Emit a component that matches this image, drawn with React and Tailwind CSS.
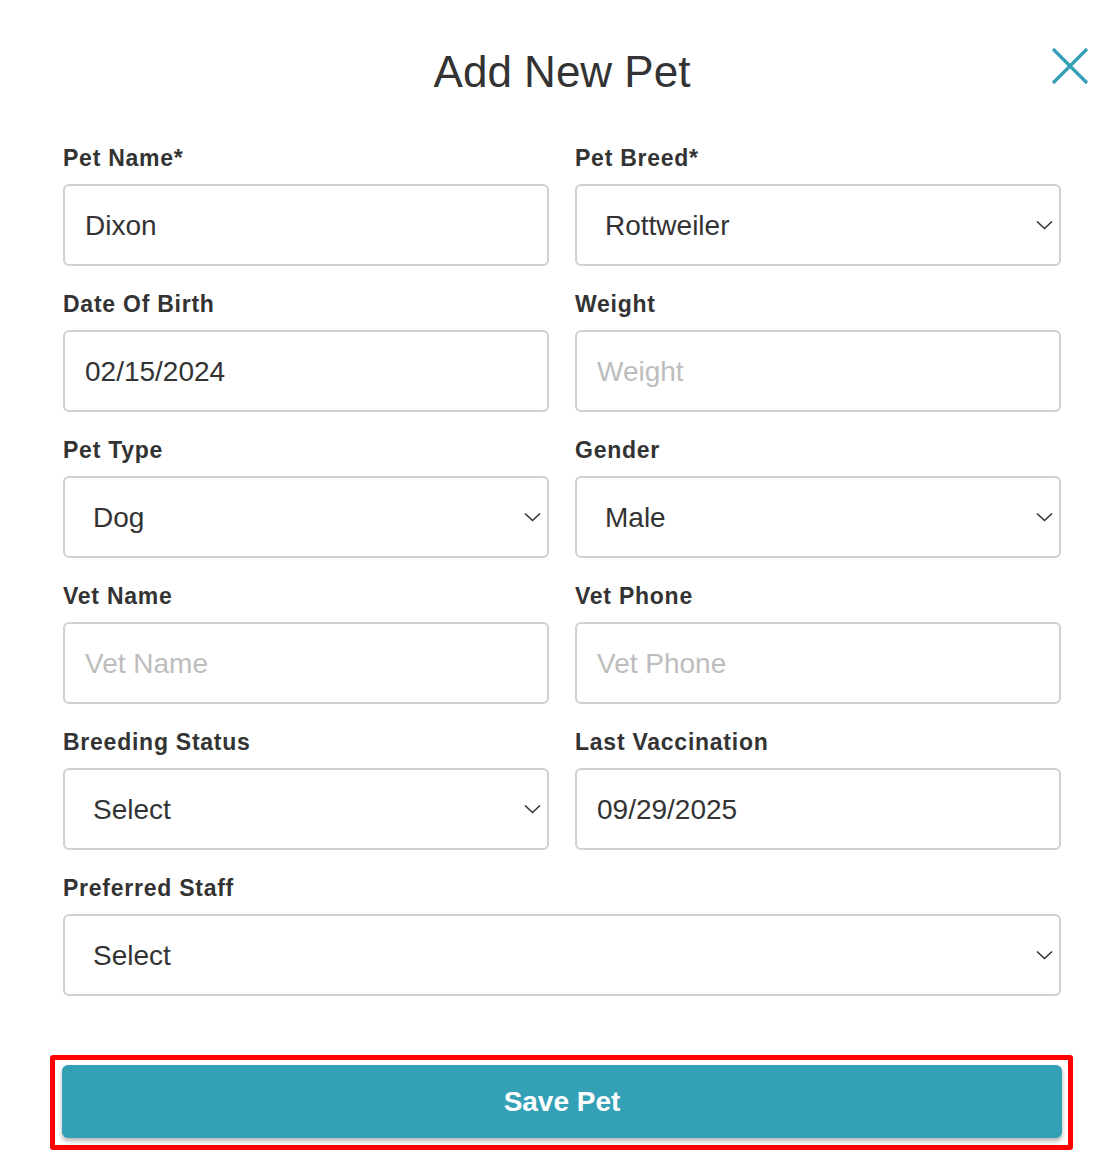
const font = { fontFamily: '"Liberation Sans", Arial, sans-serif' };

function Chevron() {
  return (
    <svg
      className="pointer-events-none absolute right-[8px] top-1/2 -translate-y-1/2"
      width="17"
      height="10"
      viewBox="0 0 17 10"
      fill="none"
    >
      <path d="M1 1.5 L8.5 8.5 L16 1.5" stroke="#333" strokeWidth="1.6" />
    </svg>
  );
}

function Field({ label, value, placeholder, select, wide }) {
  return (
    <div className={wide ? "col-span-2" : ""}>
      <label className="mb-3 block text-[23px] font-bold leading-[28px] tracking-[0.75px] text-[#333]">
        {label}
      </label>
      {select ? (
        <div className="relative">
          <select
            defaultValue={value}
            className="h-[82px] w-full appearance-none rounded-md border-2 border-[#d0d0d0] bg-white pl-[28px] pt-[2px] text-[28px] text-[#333] outline-none"
            style={font}
          >
            <option>{value}</option>
          </select>
          <Chevron />
        </div>
      ) : (
        <input
          type="text"
          readOnly
          defaultValue={value}
          placeholder={placeholder}
          className="h-[82px] w-full rounded-md border-2 border-[#d0d0d0] bg-white px-[20px] pt-[2px] text-[28px] text-[#333] outline-none placeholder:text-[#bdbdbd]"
          style={font}
        />
      )}
    </div>
  );
}

export default function App() {
  return (
    <div className="relative min-h-[1170px] w-[1110px] bg-white" style={font}>
      <button className="absolute left-[1050px] top-[46px]" aria-label="Close">
        <svg width="40" height="40" viewBox="0 0 40 40" fill="none">
          <path d="M3 3 L37 37 M37 3 L3 37" stroke="#33a0b5" strokeWidth="3.2" />
        </svg>
      </button>

      <div className="ml-[63px] w-[998px] pt-[50px]">
        <h1 className="text-center text-[44px] leading-[44px] text-[#333]">Add New Pet</h1>

        <div className="mt-[50px] grid grid-cols-2 gap-x-[26px] gap-y-[24px]">
          <Field label="Pet Name*" value="Dixon" />
          <Field label="Pet Breed*" value="Rottweiler" select />
          <Field label="Date Of Birth" value="02/15/2024" />
          <Field label="Weight" placeholder="Weight" />
          <Field label="Pet Type" value="Dog" select />
          <Field label="Gender" value="Male" select />
          <Field label="Vet Name" placeholder="Vet Name" />
          <Field label="Vet Phone" placeholder="Vet Phone" />
          <Field label="Breeding Status" value="Select" select />
          <Field label="Last Vaccination" value="09/29/2025" />
          <Field label="Preferred Staff" value="Select" select wide />
        </div>
      </div>

      <div className="ml-[50px] mt-[59px] w-[1023px] rounded-[3px] border-[5px] border-[#ff0000] pb-[7px] pl-[7px] pr-[6px] pt-[5px]">
        <button className="flex h-[73px] w-full items-center justify-center rounded-md bg-[#33a0b6] text-[28px] font-bold text-white shadow-[0_3px_5px_rgba(0,0,0,0.3)]">
          Save Pet
        </button>
      </div>
    </div>
  );
}
